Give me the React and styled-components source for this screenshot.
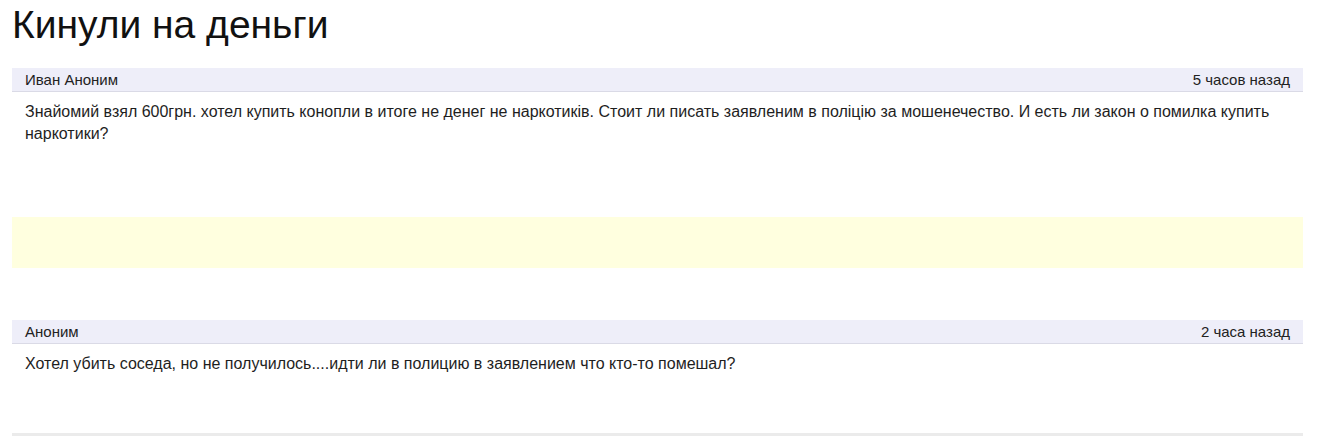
import React from "react";
import styled, { createGlobalStyle } from "styled-components";

const GlobalStyle = createGlobalStyle`
  body {
    margin: 0;
    background: #ffffff;
    font-family: "Liberation Sans", Arial, sans-serif;
    color: #222222;
  }
`;

const StyledPage = styled.div`
  padding: 4px 23px 0 12px;
`;

const StyledTitle = styled.h1`
  margin: 0 0 22px 0;
  font-size: 39px;
  font-weight: normal;
  line-height: 42px;
  color: #111111;
`;

const StyledPostHeader = styled.div`
  display: flex;
  justify-content: space-between;
  align-items: center;
  height: 23px;
  padding: 0 13px 0 13px;
  background: #eeeef9;
  border-bottom: 1px solid #dadae6;
  font-size: 15px;
  color: #222222;
`;

const StyledPostBody = styled.div`
  min-height: ${(props) => props.$minHeight}px;
  box-sizing: border-box;
  padding: 9px 13px 0 13px;
  font-size: 16px;
  line-height: 22px;
  color: #1e1e1e;
  border-bottom: ${(props) => (props.$last ? "3px solid #ebebeb" : "none")};
`;

const StyledAdSlot = styled.div`
  height: 51px;
  margin-bottom: 52px;
  background: #ffffdf;
`;

function Post({ author, time, text, minHeight, last }) {
  return (
    <div>
      <StyledPostHeader>
        <span>{author}</span>
        <span>{time}</span>
      </StyledPostHeader>
      <StyledPostBody $minHeight={minHeight} $last={last}>
        {text}
      </StyledPostBody>
    </div>
  );
}

function App() {
  return (
    <StyledPage>
      <GlobalStyle />
      <StyledTitle>Кинули на деньги</StyledTitle>
      <Post
        author="Иван Аноним"
        time="5 часов назад"
        text="Знайомий взял 600грн. хотел купить конопли в итоге не денег не наркотиків. Стоит ли писать заявленим в поліцію за мошенечество. И есть ли закон о помилка купить наркотики?"
        minHeight={125}
      />
      <StyledAdSlot />
      <Post
        author="Аноним"
        time="2 часа назад"
        text="Хотел убить соседа, но не получилось....идти ли в полицию в заявлением что кто-то помешал?"
        minHeight={92}
        last
      />
    </StyledPage>
  );
}

export default App;
